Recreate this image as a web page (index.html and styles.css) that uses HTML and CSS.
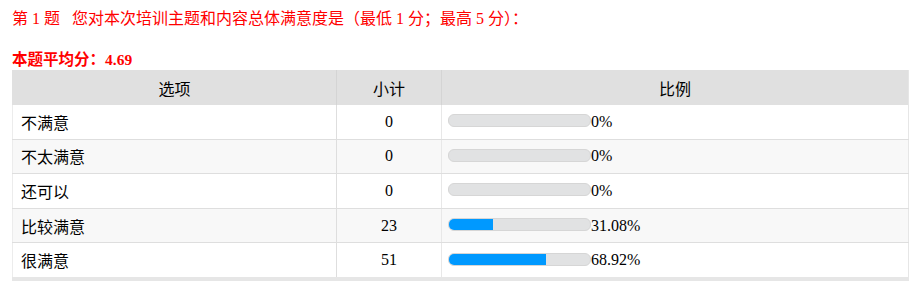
FILE: index.html
```
<!DOCTYPE html>
<html lang="zh">
<head>
<meta charset="utf-8">
<link rel="stylesheet" href="styles.css">
</head>
<body>
<div class="page">
  <div class="title">第 1 题&nbsp;&nbsp;&nbsp;您对本次培训主题和内容总体满意度是（最低 1 分；最高 5 分）：</div>
  <div class="avg">本题平均分：4.69</div>
  <table class="stats">
    <colgroup><col class="c1"><col class="c2"><col class="c3"></colgroup>
    <thead>
      <tr><th>选项</th><th>小计</th><th>比例</th></tr>
    </thead>
    <tbody>
      <tr><td class="opt">不满意</td><td class="num">0</td><td class="pct"><div class="cell"><span class="bar"><span class="fill" style="width:0%"></span></span><span>0%</span></div></td></tr>
      <tr class="alt"><td class="opt">不太满意</td><td class="num">0</td><td class="pct"><div class="cell"><span class="bar"><span class="fill" style="width:0%"></span></span><span>0%</span></div></td></tr>
      <tr><td class="opt">还可以</td><td class="num">0</td><td class="pct"><div class="cell"><span class="bar"><span class="fill" style="width:0%"></span></span><span>0%</span></div></td></tr>
      <tr class="alt"><td class="opt">比较满意</td><td class="num">23</td><td class="pct"><div class="cell"><span class="bar"><span class="fill" style="width:31.08%"></span></span><span>31.08%</span></div></td></tr>
      <tr><td class="opt">很满意</td><td class="num">51</td><td class="pct"><div class="cell"><span class="bar"><span class="fill" style="width:68.92%"></span></span><span>68.92%</span></div></td></tr>
    </tbody>
  </table>
</div>
</body>
</html>
```
FILE: styles.css
```
html, body {
  margin: 0;
  padding: 0;
  background: #fff;
}
body {
  font-family: "Liberation Serif", "Noto Sans CJK SC", serif;
  color: #000;
}
.page {
  padding: 8px 5px 0 12px;
}
.title {
  color: #ff0000;
  font-size: 16px;
  line-height: 22px;
  height: 22px;
}
.avg {
  margin-top: 20px;
  color: #ff0000;
  font-size: 15.5px;
  font-weight: bold;
  line-height: 20px;
  height: 20px;
}
.stats {
  width: 896px;
  table-layout: fixed;
  border-collapse: collapse;
  border-bottom: 4px solid #e6e6e6;
  font-size: 16px;
}
.c1 { width: 324px; }
.c2 { width: 105px; }
.c3 { width: 467px; }
.stats th {
  background: #e0e0e0;
  font-weight: normal;
  height: 35px;
  padding: 0;
  text-align: center;
  border-left: 1px solid #d4d4d4;
  border-right: 1px solid #d4d4d4;
}
.stats th:first-child { border-left: 1px solid #e0e0e0; }
.stats th:last-child { border-right: 1px solid #e6e6e6; }
.stats td {
  height: 33.6px;
  padding: 0;
  border: 1px solid #dedede;
  border-top: 0;
  background: #fff;
}
.stats td:first-child { border-left: 1px solid #ececec; }
.stats td:last-child { border-right: 1px solid #e6e6e6; }
.stats td:nth-child(2) { border-right: 1px solid #e8e8e8; }
.stats tr.alt td { background: #f8f8f8; }
.opt {
  padding-left: 8px !important;
}
.num {
  text-align: center;
}
.pct {
  padding-left: 6px !important;
}
.cell {
  display: flex;
  align-items: center;
  line-height: 20px;
}
.bar {
  display: block;
  width: 141px;
  height: 11px;
  border-radius: 6px;
  background: #e1e2e3;
  border: 1px solid #d6d6d6;
  overflow: hidden;
  flex: none;
  margin-top: -2px;
}
.fill {
  display: block;
  height: 100%;
  background: #0099ff;
}
```
